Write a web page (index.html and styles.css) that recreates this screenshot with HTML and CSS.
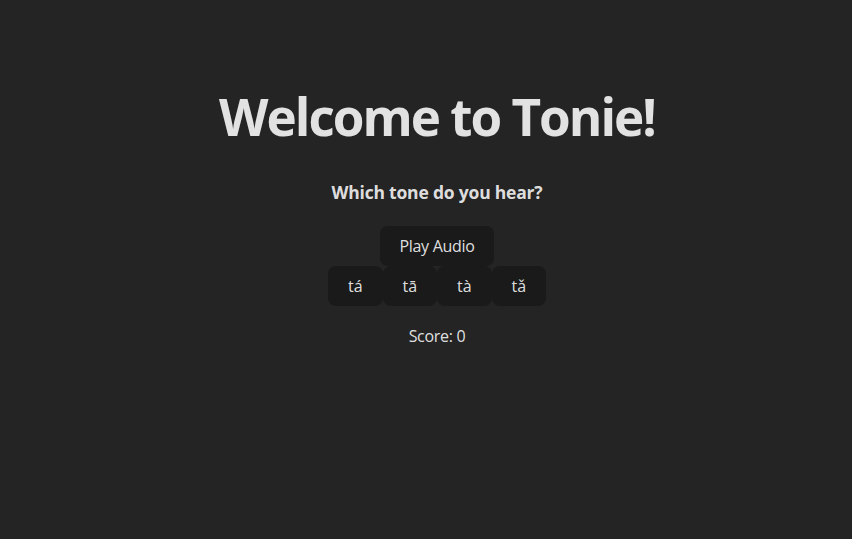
FILE: index.html
```html
<!DOCTYPE html>
<html lang="en">
<head>
<meta charset="UTF-8">
<title>Tonie</title>
<link rel="stylesheet" href="styles.css">
</head>
<body>
<div class="app">
  <h1 class="title">Welcome to Tonie!</h1>
  <p class="question">Which tone do you hear?</p>
  <div class="controls">
    <button class="btn play">Play Audio</button>
    <div class="tones">
      <button class="btn tone">tá</button>
      <button class="btn tone">tā</button>
      <button class="btn tone">tà</button>
      <button class="btn tone">tǎ</button>
    </div>
  </div>
  <p class="score">Score: 0</p>
</div>
</body>
</html>
```
FILE: styles.css
```css
html, body {
  margin: 0;
  padding: 0;
  background: #242424;
  color: rgba(255, 255, 255, 0.87);
  font-family: "Open Sans", "Noto Sans", sans-serif;
  height: 100%;
}
.app {
  display: flex;
  flex-direction: column;
  align-items: center;
  padding-top: 88px;
  padding-left: 22px;
  text-align: center;
}
.title {
  margin: 0;
  font-size: 51.2px;
  line-height: 56px;
  font-weight: 700;
  letter-spacing: -2px;
}
.question {
  margin: 36px 0 0;
  font-size: 17.5px;
  line-height: 24px;
  font-weight: 700;
  letter-spacing: -0.2px;
}
.controls {
  margin-top: 22px;
  display: flex;
  flex-direction: column;
  align-items: center;
}
.btn {
  font-family: inherit;
  font-size: 16px;
  line-height: 19px;
  color: rgba(255, 255, 255, 0.87);
  background: #1a1a1a;
  border: 1px solid transparent;
  border-radius: 8px;
  padding: 9.6px 19.2px;
  cursor: pointer;
  white-space: nowrap;
}
.play {
  height: 40px;
  padding: 0 18px;
  letter-spacing: -0.3px;
}
.tones {
  display: flex;
}
.tone {
  width: 54.5px;
  height: 40px;
  padding: 0;
}
.score {
  margin: 18px 0 0;
  font-size: 16px;
  line-height: 24px;
  letter-spacing: -0.3px;
}
```
